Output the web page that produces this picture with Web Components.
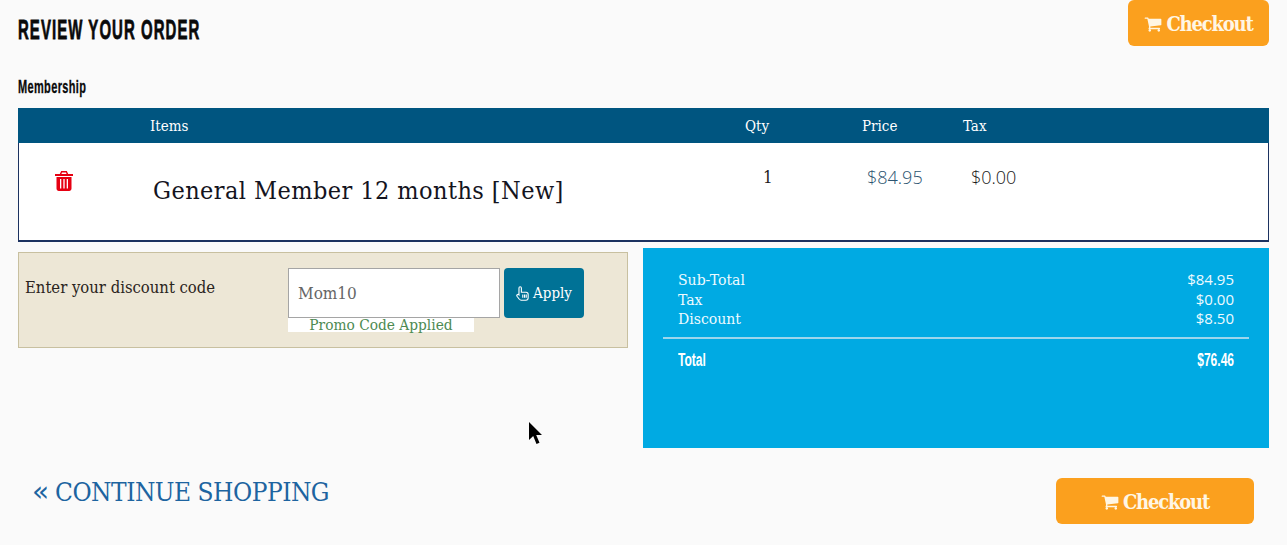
<!DOCTYPE html>
<html lang="en">
<head>
<meta charset="utf-8">
<title>Review your order</title>
<style>
  html, body { margin: 0; height: 545px; overflow: hidden; background: #fafafa; }
  body { position: relative; color: #222; font: 16px "DejaVu Serif Condensed", "DejaVu Serif", serif; }
</style>
</head>
<body>
<review-page>
  <review-header slot="header" title="Review your order"></review-header>
  <order-table slot="table" section="Membership"></order-table>
  <discount-box slot="discount" code="Mom10" message="Promo Code Applied"></discount-box>
  <totals-panel slot="totals"></totals-panel>
  <review-footer slot="footer"></review-footer>
</review-page>
<mouse-cursor></mouse-cursor>

<script>
const CART = `<svg width="1em" height="1em" viewBox="0 0 1664 1792" fill="currentColor" aria-hidden="true"><path d="M640 1536q0 52-38 90t-90 38-90-38-38-90 38-90 90-38 90 38 38 90zm896 0q0 52-38 90t-90 38-90-38-38-90 38-90 90-38 90 38 38 90zm128-1088v512q0 24-16.500 42.500t-40.500 21.500l-1044 122q13 60 13 70 0 16-24 64h920q26 0 45 19t19 45-19 45-45 19h-1024q-26 0-45-19t-19-45q0-11 8-31.500t16-36 21.500-40 15.500-29.500l-177-823h-204q-26 0-45-19t-19-45 19-45 45-19h256q16 0 28.500 6.500t19.500 15.500 13 24.500 8 26 5.500 29.500 4.500 26h1201q26 0 45 19t19 45z"/></svg>`;

class CheckoutButton extends HTMLElement {
  constructor() {
    super();
    const shadowRoot = this.attachShadow({mode: 'open'});
    shadowRoot.innerHTML = `
      <style>
        :host { display: inline-flex; }
        a {
          display: flex;
          flex: 1;
          align-items: center;
          justify-content: center;
          gap: 4px;
          height: 46px;
          box-sizing: border-box;
          padding-top: 2px;
          background: #fba01e;
          color: #fff6e4;
          border-radius: 6px;
          font: 700 20px "DejaVu Serif Condensed", "DejaVu Serif", serif;
          letter-spacing: -1.2px;
          text-decoration: none;
        }
        svg { font-size: 18px; }
      </style>
      <a href="#">${CART}<span>Checkout</span></a>`;
  }
}

class ReviewHeader extends HTMLElement {
  constructor() {
    super();
    const shadowRoot = this.attachShadow({mode: 'open'});
    shadowRoot.innerHTML = `
      <style>
        :host { display: flex; justify-content: space-between; height: 108px; }
        h1 {
          margin: 12px 0 0;
          font: 700 28px/36px "Liberation Sans", sans-serif;
          letter-spacing: 2px;
          -webkit-text-stroke: 0.8px #0a0a0a;
          text-transform: uppercase;
          white-space: nowrap;
          color: #0a0a0a;
          transform: scaleX(.534);
          transform-origin: left;
        }
        checkout-button { width: 141px; }
      </style>
      <h1></h1>
      <checkout-button></checkout-button>`;
    shadowRoot.querySelector('h1').textContent = this.getAttribute('title');
  }
}

class OrderTable extends HTMLElement {
  constructor() {
    super();
    const shadowRoot = this.attachShadow({mode: 'open'});
    shadowRoot.innerHTML = `
      <style>
        :host { display: block; margin-top: -32px; }
        h2 {
          margin: 0 0 9px;
          height: 23px;
          font: 700 18px/23px "Liberation Sans", sans-serif;
          letter-spacing: 0.6px;
          -webkit-text-stroke: 0.3px #0a0a0a;
          color: #0a0a0a;
          transform: scaleX(.61);
          transform-origin: left;
        }
        .grid { display: grid; grid-template-columns: 132px 595px 117px 101px 1fr; }
        .head {
          height: 35px;
          align-items: center;
          background: #005580;
          color: #fff;
          font-size: 15px;
        }
        .body {
          height: 99px;
          box-sizing: border-box;
          background: #fff;
          border: solid #1c3260;
          border-width: 0 1px 2px;
          font: 300 18px "Open Sans", sans-serif;
          color: #1a1a1a;
        }
        .body > * { padding-top: 22px; line-height: 24px; }
        .trash { padding: 28px 0 0 36px; color: #e60012; line-height: 0; }
        .name {
          padding: 32px 0 0 2px;
          font: 25px/32px "DejaVu Serif Condensed", "DejaVu Serif", serif;
          letter-spacing: 0.43px;
          color: #14141e;
        }
        .qty { padding-left: 17px; font: 17px/24px "DejaVu Serif Condensed", "DejaVu Serif", serif; }
        .price { padding-left: 4px; color: #2c5470; }
        .tax { padding-left: 7px; }
      </style>
      <h2></h2>
      <div class="grid head">
        <span></span><span>Items</span><span>Qty</span><span>Price</span><span>Tax</span>
      </div>
      <div class="grid body">
        <div class="trash">
          <svg width="18" height="20" viewBox="0 0 18 20" fill="currentColor" aria-hidden="true">
            <path d="M6.200 0h5.600l1.400 3H18v2H0V3h4.800zM7 1.600 6.400 3h5.200L11 1.600z"/>
            <path fill-rule="evenodd" d="M1.500 6h15v11.500c0 1.400-1 2.500-2.300 2.500H3.800c-1.300 0-2.300-1.100-2.300-2.500zM5 8v9.500h1.300V8zm3.350 0v9.500h1.300V8zm3.350 0v9.500H13V8z"/>
          </svg>
        </div>
        <div class="name">General Member 12 months [New]</div>
        <div class="qty">1</div>
        <div class="price">$84.95</div>
        <div class="tax">$0.00</div>
      </div>`;
    shadowRoot.querySelector('h2').textContent = this.getAttribute('section');
  }
}

class DiscountBox extends HTMLElement {
  constructor() {
    super();
    const shadowRoot = this.attachShadow({mode: 'open'});
    shadowRoot.innerHTML = `
      <style>
        :host {
          display: grid;
          grid-template-columns: 263px 212px auto;
          align-content: start;
          width: 610px;
          height: 96px;
          box-sizing: border-box;
          margin-top: 10px;
          padding: 15px 0 0 6px;
          background: #ede7d6;
          border: 1px solid #c8c0a0;
          font-size: 16.500px;
          color: #2a2420;
        }
        label { padding-top: 10px; line-height: 20px; white-space: nowrap; }
        .field { display: block; }
        input {
          display: block;
          width: 212px;
          height: 50px;
          box-sizing: border-box;
          padding: 0 9px;
          background: #fff;
          border: 1px solid #a5a5a5;
          color: #666;
          font: 17px "DejaVu Serif Condensed", "DejaVu Serif", serif;
          outline: none;
        }
        .note {
          width: 186px;
          height: 14px;
          background: #fff;
          color: #4d8a52;
          font-size: 15.300px;
          line-height: 14px;
          text-align: center;
          white-space: nowrap;
        }
        button {
          display: flex;
          align-items: center;
          justify-content: center;
          gap: 4px;
          width: 80px;
          height: 50px;
          margin-left: 4px;
          padding: 0;
          background: #007296;
          border: 0;
          border-radius: 4px;
          color: #fff;
          font: 15px "DejaVu Serif Condensed", "DejaVu Serif", serif;
        }
      </style>
      <label>Enter your discount code</label>
      <div class="field">
        <input>
        <div class="note"></div>
      </div>
      <button>
        <svg width="13" height="15" viewBox="0 0 14 16" fill="none" stroke="currentColor" stroke-width="1.200" aria-hidden="true">
          <path d="M3.200 9V2a1.300 1.300 0 0 1 2.600 0v4.700h5c1.300 0 2.300 1 2.300 2.300v3.500c0 1.500-1 2.700-2.500 2.700H5.500c-.8 0-1.400-.4-1.900-1L1.100 11c-.8-1.200.9-2.700 2.100-1.500z"/>
          <path d="M7.300 9v3.500M9.200 9v3.500M11 9v3.500"/>
        </svg>
        Apply
      </button>`;
    shadowRoot.querySelector('input').value = this.getAttribute('code');
    shadowRoot.querySelector('.note').textContent = this.getAttribute('message');
  }
}

class TotalsPanel extends HTMLElement {
  constructor() {
    super();
    const shadowRoot = this.attachShadow({mode: 'open'});
    shadowRoot.innerHTML = `
      <style>
        :host {
          display: block;
          width: 626px;
          height: 200px;
          box-sizing: border-box;
          padding: 23px 20px 0;
          background: #00aae3;
          color: #eefaff;
          font-size: 15.600px;
        }
        .rows { padding: 0 15px; display: grid; grid-template-columns: 1fr auto; grid-auto-rows: 19.500px; line-height: 19px; }
        .rows span:nth-child(even) { text-align: right; font: 15px/17px "Open Sans", sans-serif; }
        hr { margin: 7px 0 0; border: 0; border-top: 2px solid #9cd6ec; }
        .total {
          display: flex;
          justify-content: space-between;
          margin-top: 9px;
          padding: 0 15px;
          color: #fff;
          font: 700 18px/24px "Liberation Sans", sans-serif;
        }
        .total span { display: inline-block; transform: scaleX(.67); transform-origin: left; }
        .total span + span { transform-origin: right; }
      </style>
      <div class="rows">
        <span>Sub-Total</span><span>$84.95</span>
        <span>Tax</span><span>$0.00</span>
        <span>Discount</span><span>$8.50</span>
      </div>
      <hr>
      <div class="total"><span>Total</span><span>$76.46</span></div>`;
  }
}

class ReviewFooter extends HTMLElement {
  constructor() {
    super();
    const shadowRoot = this.attachShadow({mode: 'open'});
    shadowRoot.innerHTML = `
      <style>
        :host { display: flex; justify-content: space-between; padding: 30px 15px 0; }
        a {
          color: #1d64a0;
          font: 26px/28px "DejaVu Serif Condensed", "DejaVu Serif", serif;
          letter-spacing: -0.5px;
          text-decoration: none;
          white-space: nowrap;
        }
        i { display: inline-block; width: 23px; margin-left: -1px; font: 28px/28px "DejaVu Sans", sans-serif; }
        checkout-button { width: 198px; }
      </style>
      <a href="#"><i>«</i>CONTINUE SHOPPING</a>
      <checkout-button></checkout-button>`;
  }
}

class ReviewPage extends HTMLElement {
  constructor() {
    super();
    const shadowRoot = this.attachShadow({mode: 'open'});
    shadowRoot.innerHTML = `
      <style>
        :host { display: block; padding: 0 18px; }
        .columns { display: grid; grid-template-columns: 625px 626px; align-items: start; }
        .side { margin-top: 6px; }
      </style>
      <slot name="header"></slot>
      <slot name="table"></slot>
      <div class="columns">
        <slot name="discount"></slot>
        <div class="side"><slot name="totals"></slot></div>
      </div>
      <slot name="footer"></slot>`;
  }
}

// the pointer sits over the page in the screenshot
class MouseCursor extends HTMLElement {
  constructor() {
    super();
    const shadowRoot = this.attachShadow({mode: 'open'});
    shadowRoot.innerHTML = `
      <style>
        :host { position: absolute; left: 528px; top: 422px; width: 15px; height: 24px; }
      </style>
      <svg width="15" height="24" viewBox="0 0 15 24" aria-hidden="true">
        <path d="M1 0v18l4.200-4 3.300 8 3-1.200-3.300-7.800H14z" fill="#000"/>
      </svg>`;
  }
}

customElements.define('checkout-button', CheckoutButton);
customElements.define('review-header', ReviewHeader);
customElements.define('order-table', OrderTable);
customElements.define('discount-box', DiscountBox);
customElements.define('totals-panel', TotalsPanel);
customElements.define('review-footer', ReviewFooter);
customElements.define('review-page', ReviewPage);
customElements.define('mouse-cursor', MouseCursor);
</script>
</body>
</html>
